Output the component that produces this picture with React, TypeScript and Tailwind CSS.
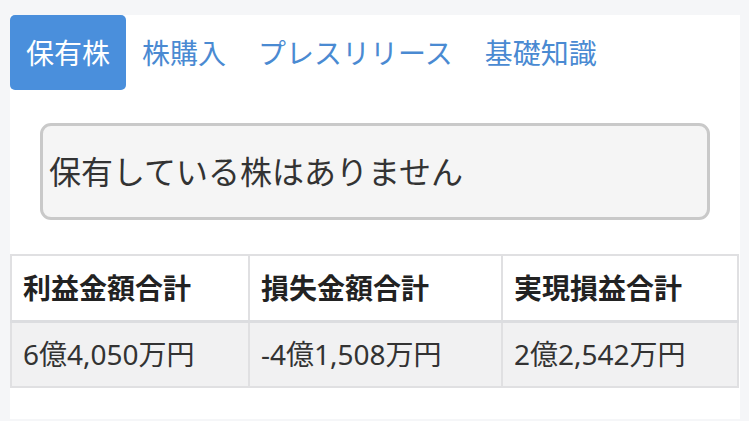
import React from "react";

const tabs = ["保有株", "株購入", "プレスリリース", "基礎知識"];

const totals = [
  { label: "利益金額合計", value: "6億4,050万円", width: "w-[238px]" },
  { label: "損失金額合計", value: "-4億1,508万円", width: "w-[253px]" },
  { label: "実現損益合計", value: "2億2,542万円", width: "" },
];

export default function App() {
  return (
    <div
      className="min-h-[421px] bg-[#f5f6f8] pt-[15px] pl-[10px] pr-[9px] pb-[2px]"
      style={{ fontFamily: '"Noto Sans", "Noto Sans CJK JP", sans-serif' }}
    >
      <div className="bg-white h-[404px]">
        <div className="flex">
          {tabs.map((t, i) => (
            <div
              key={t}
              className={
                i === 0
                  ? "h-[75px] px-[16px] flex items-center rounded-[5px] bg-[#4a8fdc] text-white text-[28px]"
                  : "h-[75px] px-[16px] flex items-center text-[#4a8ad2] text-[28px]"
              }
            >
              {t}
            </div>
          ))}
        </div>

        <div className="mx-[30px] mt-[33px] h-[97px] border-[3px] border-[#c9c9c9] rounded-[11px] bg-[#f5f5f5] flex items-center px-[6px] text-[32px] text-[#333]">
          保有している株はありません
        </div>

        <table className="mt-[34px] w-[729px] border-collapse border-2 border-[#e0e0e2]">
          <thead>
            <tr className="h-[66px] border-b-[3px] border-[#dcdde0]">
              {totals.map((c) => (
                <th
                  key={c.label}
                  className={`${c.width} text-left font-bold text-[28px] text-[#222] pl-[11px] border-x-2 border-[#e0e0e2]`}
                >
                  {c.label}
                </th>
              ))}
            </tr>
          </thead>
          <tbody>
            <tr className="h-[66px] bg-[#f1f1f2]">
              {totals.map((c) => (
                <td
                  key={c.label}
                  className="text-left text-[28px] text-[#333] pl-[11px] border-x-2 border-[#e0e0e2]"
                >
                  {c.value}
                </td>
              ))}
            </tr>
          </tbody>
        </table>
      </div>
    </div>
  );
}
